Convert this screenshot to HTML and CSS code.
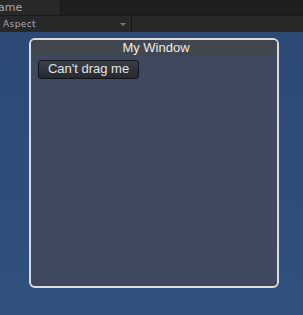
FILE: index.html
```html
<!DOCTYPE html>
<html>
	<head>
		<meta charset="UTF-8">
		<title>Game</title>
		<link rel="stylesheet" href="styles.css">
	</head>
	<body>
		<div class="tabs">
			<div class="tab">ame</div>
		</div>
		<div class="toolbar">
			<div class="aspect">
				<span>Aspect</span>
				<span class="arrow"></span>
			</div>
		</div>
		<div class="view">
			<div class="window">
				<div class="title">My Window</div>
				<div class="content">
					<button class="btn">Can't drag me</button>
				</div>
			</div>
		</div>
	</body>
</html>
```

FILE: styles.css
```css
*{
	margin: 0;
	padding: 0;
	box-sizing: border-box;
}

body{
	width: 303px;
	height: 315px;
	overflow: hidden;
	background-color: #2f4d7a;
	font-family: "Liberation Sans", Arial, sans-serif;
}

/* tab strip */
.tabs{
	height: 15px;
	background-color: #1f1f1f;
	display: flex;
}
.tab{
	width: 64px;
	height: 15px;
	background-color: #282828;
	border-right: 1px solid #151515;
	color: #a8a8a8;
	font-family: "DejaVu Sans", sans-serif;
	font-size: 11px;
	line-height: 15px;
	padding-left: 1px;
	margin-left: -3px;
}

/* toolbar */
.toolbar{
	height: 17px;
	background-color: #282828;
	border-top: 1px solid #1a1a1a;
	display: flex;
}
.aspect{
	width: 132px;
	height: 16px;
	border-right: 1px solid #161616;
	display: flex;
	align-items: center;
	justify-content: space-between;
	padding: 0 5px 0 3px;
	color: #a8a8a8;
	font-family: "DejaVu Sans", sans-serif;
	font-size: 9px;
	letter-spacing: 0.4px;
}
.arrow{
	width: 0;
	height: 0;
	border-left: 3px solid transparent;
	border-right: 3px solid transparent;
	border-top: 3px solid #7a7a7a;
	margin-top: 1px;
}

/* game view */
.view{
	height: 283px;
	background: linear-gradient(#2d4a76, #30507e);
	padding: 6px 0 0 29px;
}
.window{
	width: 250px;
	height: 250px;
	border: 2px solid #dcdcdc;
	border-radius: 6px;
	background-color: #3e4960;
	overflow: hidden;
	display: flex;
	flex-direction: column;
}
.title{
	height: 16px;
	background-color: #42464e;
	color: #ececec;
	font-size: 13px;
	line-height: 15px;
	text-align: center;
	padding-left: 4px;
}
.content{
	padding: 3px 0 0 7px;
}
.btn{
	width: 101px;
	height: 19px;
	border: 1px solid #121418;
	border-radius: 3px;
	background: linear-gradient(#3a3f48, #252a31);
	color: #e2e2e2;
	font-family: "Liberation Sans", Arial, sans-serif;
	font-size: 13px;
	line-height: 16px;
	text-align: center;
}
```
